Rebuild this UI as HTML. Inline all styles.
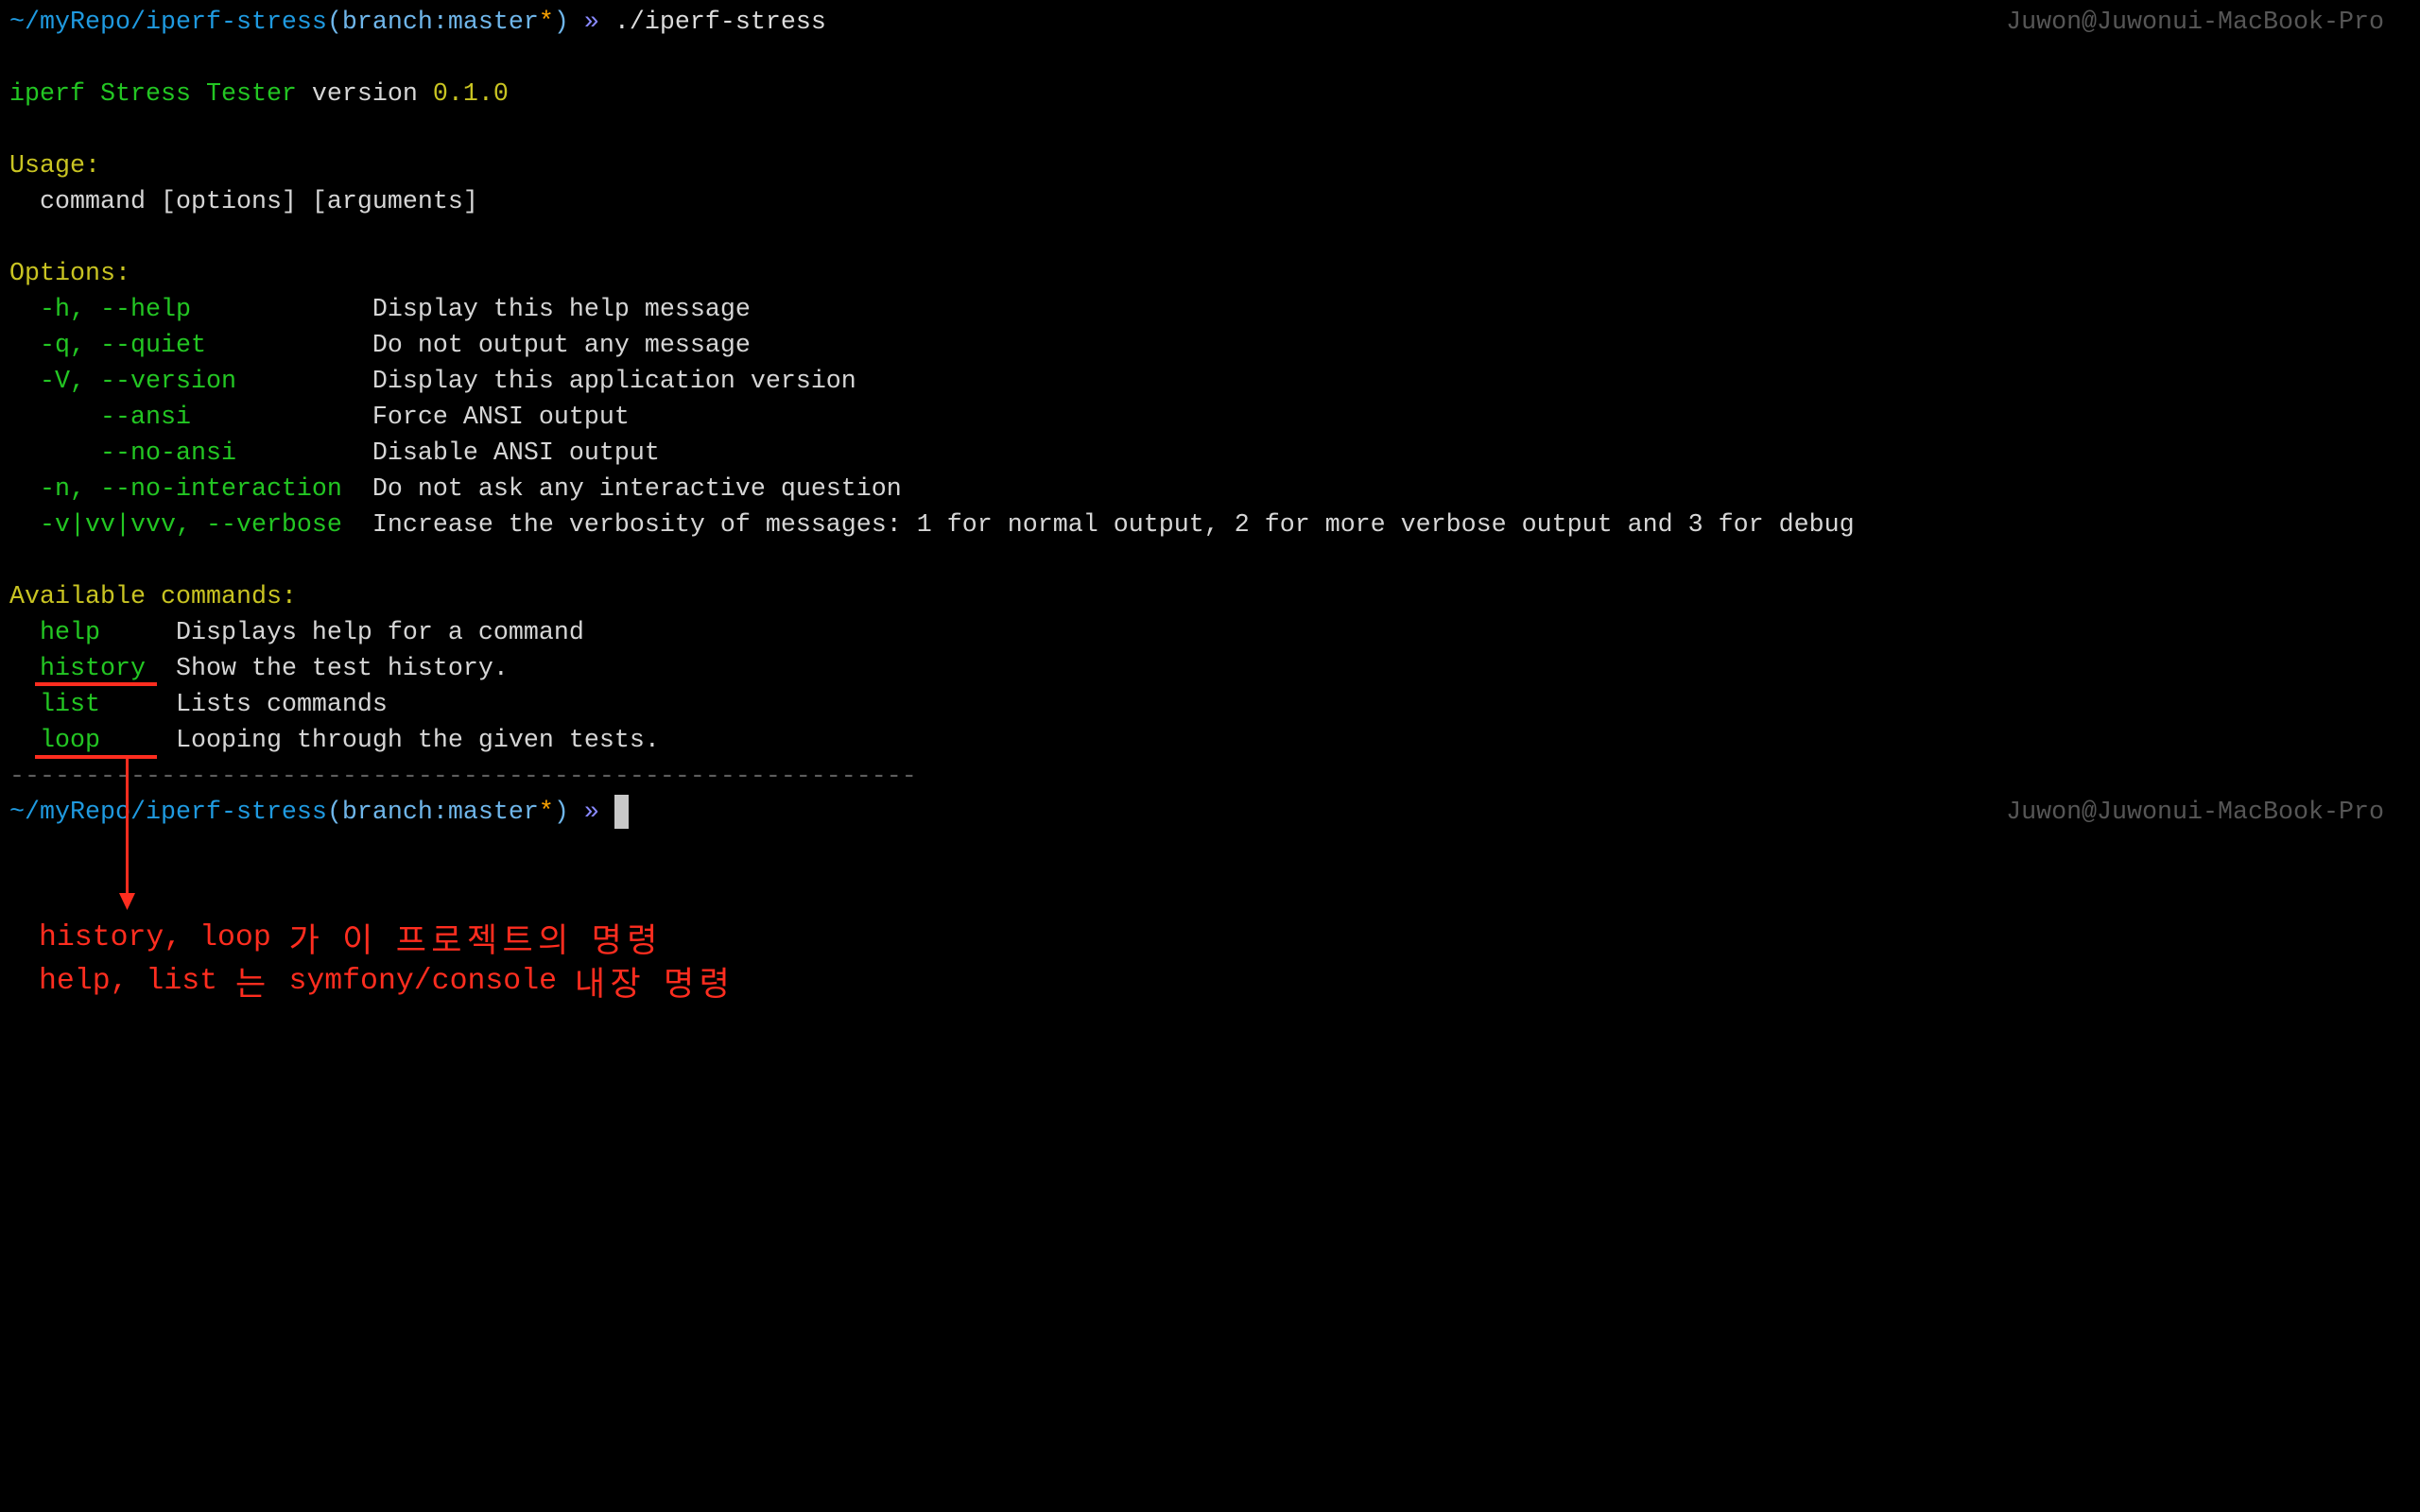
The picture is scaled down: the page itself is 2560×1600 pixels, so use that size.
<!DOCTYPE html>
<html><head><meta charset="utf-8"><style>
html,body{margin:0;padding:0;background:#000;width:2560px;height:1600px;overflow:hidden}
.l{position:absolute;left:10px;height:38px;line-height:38px;font-family:"Liberation Mono","DejaVu Sans Mono",monospace;font-size:26.67px;white-space:pre;color:#d6d6d6;margin-top:3px}
.g{color:#23c623}.y{color:#c9c422}.b{color:#1f9ae0}.lb{color:#6fb6ea}.o{color:#ffa500}.p{color:#8a8aff}.w{color:#dcdcdc}
.r{position:absolute;right:38px;height:38px;line-height:38px;font-family:"Liberation Mono",monospace;font-size:26.67px;color:#565656;white-space:pre;margin-top:3px}
.red{position:absolute;left:41px;height:46px;font-family:"Liberation Mono","Noto Sans CJK KR",monospace;font-size:31.5px;color:#ff2d1f;white-space:pre;line-height:46px;overflow:visible}
.k{font-family:"Noto Sans CJK KR",sans-serif;font-size:35px;letter-spacing:5.4px;line-height:46px;vertical-align:top}
.rl{position:absolute;background:#ff2d1f}
</style></head><body>
<div class="l" style="top:2px"><span class="b">~/myRepo/iperf-stress</span><span class="lb">(branch:master</span><span class="o">*</span><span class="lb">)</span> <span class="p">»</span> <span class="w">./iperf-stress</span></div>
<div class="r" style="top:2px">Juwon@Juwonui-MacBook-Pro</div>
<div class="l" style="top:78px"><span class="g">iperf Stress Tester</span> version <span class="y">0.1.0</span></div>
<div class="l y" style="top:154px">Usage:</div>
<div class="l" style="top:192px">  command [options] [arguments]</div>
<div class="l y" style="top:268px">Options:</div>
<div class="l" style="top:306px"><span class="g">  -h, --help            </span>Display this help message</div>
<div class="l" style="top:344px"><span class="g">  -q, --quiet           </span>Do not output any message</div>
<div class="l" style="top:382px"><span class="g">  -V, --version         </span>Display this application version</div>
<div class="l" style="top:420px"><span class="g">      --ansi            </span>Force ANSI output</div>
<div class="l" style="top:458px"><span class="g">      --no-ansi         </span>Disable ANSI output</div>
<div class="l" style="top:496px"><span class="g">  -n, --no-interaction  </span>Do not ask any interactive question</div>
<div class="l" style="top:534px"><span class="g">  -v|vv|vvv, --verbose  </span>Increase the verbosity of messages: 1 for normal output, 2 for more verbose output and 3 for debug</div>
<div class="l y" style="top:610px">Available commands:</div>
<div class="l" style="top:648px"><span class="g">  help     </span>Displays help for a command</div>
<div class="l" style="top:686px"><span class="g">  history  </span>Show the test history.</div>
<div class="l" style="top:724px"><span class="g">  list     </span>Lists commands</div>
<div class="l" style="top:762px"><span class="g">  loop     </span>Looping through the given tests.</div>
<div class="l" style="top:800px;color:#5e5e5e">------------------------------------------------------------</div>
<div class="l" style="top:838px"><span class="b">~/myRepo/iperf-stress</span><span class="lb">(branch:master</span><span class="o">*</span><span class="lb">)</span> <span class="p">»</span> </div>
<div style="position:absolute;left:650px;top:841px;width:15px;height:36px;background:#c8c8c8"></div>
<div class="r" style="top:838px">Juwon@Juwonui-MacBook-Pro</div>
<div class="rl" style="left:37px;top:722px;width:129px;height:4px"></div>
<div class="rl" style="left:37px;top:799px;width:129px;height:4px"></div>
<div class="rl" style="left:133px;top:801px;width:3px;height:148px"></div>
<svg style="position:absolute;left:0;top:0" width="300" height="1000"><polygon points="126,945 143,945 134.5,963" fill="#ff2d1f"/></svg>
<div class="red" style="top:970px">history, loop <span class="k">가</span> <span class="k">이</span> <span class="k">프로젝트의</span> <span class="k">명령</span></div>
<div class="red" style="top:1016px">help, list <span class="k">는</span> symfony/console <span class="k">내장</span> <span class="k">명령</span></div>
</body></html>
